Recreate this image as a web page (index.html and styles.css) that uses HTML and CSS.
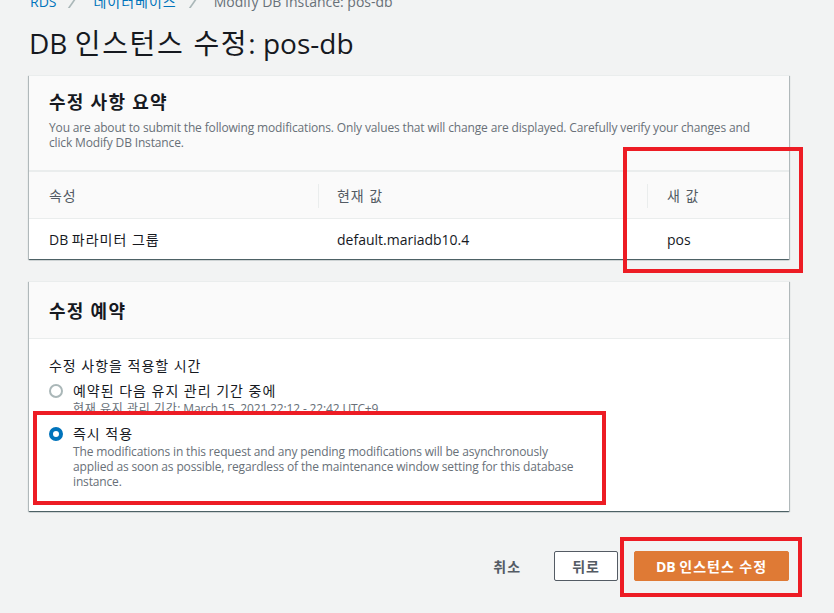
FILE: index.html
```html
<!DOCTYPE html>
<html lang="ko">
<head>
<meta charset="utf-8">
<title>DB 인스턴스 수정: pos-db</title>
<link rel="stylesheet" href="styles.css">
</head>
<body>
<div class="page">
  <nav class="crumbs">
    <a class="crumb-link">RDS</a>
    <span class="crumb-sep"></span>
    <a class="crumb-link ko">데이터베이스</a>
    <span class="crumb-sep"></span>
    <span class="crumb-current">Modify DB Instance: pos-db</span>
  </nav>
  <h1 class="title">DB <span class="ko">인스턴스 수정</span>: pos-db</h1>

  <section class="panel">
    <div class="panel-head">
      <h2 class="panel-title ko">수정 사항 요약</h2>
      <p class="panel-desc">You are about to submit the following modifications. Only values that will change are displayed. Carefully verify your changes and click Modify DB Instance.</p>
    </div>
    <div class="table">
      <div class="cell th c1 ko">속성</div>
      <div class="cell th c2 ko"><span class="divider"></span>현재 값</div>
      <div class="cell th c3 ko"><span class="divider"></span>새 값</div>
      <div class="cell td c1">DB&nbsp;<span class="ko">파라미터 그룹</span></div>
      <div class="cell td c2">default.mariadb10.4</div>
      <div class="cell td c3">pos</div>
    </div>
    <div class="mark mark-newvalue"></div>
  </section>

  <section class="panel">
    <div class="panel-head compact">
      <h2 class="panel-title ko">수정 예약</h2>
    </div>
    <div class="panel-body">
      <div class="field-label ko">수정 사항을 적용할 시간</div>
      <div class="radio-row">
        <span class="radio"></span>
        <div class="radio-text">
          <div class="radio-label ko">예약된 다음 유지 관리 기간 중에</div>
          <div class="radio-desc"><span class="ko">현재 유지 관리 기간</span>: March 15, 2021 22:12 - 22:42 UTC+9</div>
        </div>
      </div>
      <div class="radio-row second">
        <span class="radio checked"></span>
        <div class="radio-text">
          <div class="radio-label ko">즉시 적용</div>
          <div class="radio-desc narrow">The modifications in this request and any pending modifications will be asynchronously applied as soon as possible, regardless of the maintenance window setting for this database instance.</div>
        </div>
      </div>
    </div>
    <div class="mark mark-apply"></div>
  </section>

  <div class="actions">
    <button class="btn btn-link ko">취소</button>
    <button class="btn btn-normal ko">뒤로</button>
    <button class="btn btn-primary">DB <span class="ko">인스턴스 수정</span></button>
    <div class="mark mark-submit"></div>
  </div>
</div>
</body>
</html>
```
FILE: styles.css
```css
* { box-sizing: border-box; }
html, body { margin: 0; padding: 0; }
body {
  background: #f2f3f3;
  font-family: "Open Sans", "Noto Sans CJK KR", sans-serif;
  color: #16191f;
  width: 834px;
  height: 613px;
  overflow: hidden;
}
.ko { letter-spacing: 0.07em; }
.page {
  padding-left: 29px;
  width: 789px;
}
.crumbs {
  display: flex;
  align-items: center;
  height: 20px;
  margin-top: -8px;
  font-size: 14px;
  line-height: 20px;
  padding-left: 1px;
}
.crumb-link { color: #0073bb; }
.crumb-current { color: #687078; }
.crumb-sep {
  width: 2px;
  height: 12px;
  background: #aab7b8;
  transform: skewX(-35deg);
  margin: 0 19px 0 16px;
}
.title {
  margin: 13px 0 0 0;
  font-size: 28px;
  font-weight: 400;
  line-height: 36px;
  height: 50px;
}
.title .ko { letter-spacing: 0.06em; }
.panel {
  position: relative;
  background: #fff;
  border-top: 1px solid #eaeded;
  box-shadow: 0 1px 1px 0 rgba(0,28,36,0.5), 1px 1px 1px 0 rgba(0,28,36,0.2), -1px 1px 1px 0 rgba(0,28,36,0.2);
  margin-bottom: 22px;
}
.panel-head {
  background: #fafafa;
  padding: 14px 20px 20px 20px;
  border-bottom: 2px solid #eaeded;
}
.panel-head.compact {
  padding: 17px 20px 15px 20px;
  border-bottom: 1px solid #eaeded;
}
.panel-title {
  margin: 0;
  font-size: 18px;
  font-weight: 700;
  line-height: 24px;
}
.panel-desc {
  margin: 6px 0 0 0;
  font-size: 12px;
  line-height: 15px;
  color: #687078;
  letter-spacing: -0.15px;
}
.table {
  display: grid;
  grid-template-columns: 289px 329px 1fr;
}
.cell {
  position: relative;
  font-size: 14px;
  padding: 0 20px;
  display: flex;
  align-items: center;
}
.cell.c2 { padding-left: 19px; }
.th {
  height: 47px;
  background: #fafafa;
  color: #545b64;
  border-bottom: 1px solid #eaeded;
}
.td { height: 40px; }
.divider {
  position: absolute;
  left: 0;
  top: 12px;
  height: 24px;
  width: 1px;
  background: #eaeded;
}
.panel-body {
  padding: 17px 20px 22px 20px;
}
.field-label {
  font-size: 14px;
  line-height: 20px;
  color: #16191f;
}
.radio-row {
  display: flex;
  align-items: flex-start;
  margin-top: 5px;
}
.radio-row.second { margin-top: 8px; }
.radio {
  flex: none;
  width: 14px;
  height: 14px;
  border-radius: 50%;
  border: 2px solid #aab7b8;
  background: #fff;
  margin: 3px 10px 0 0;
}
.radio.checked {
  border: 4px solid #0073bb;
  background: #fff;
}
.radio-label {
  font-size: 14px;
  line-height: 20px;
}
.radio-desc {
  font-size: 12px;
  line-height: 15px;
  color: #687078;
  letter-spacing: -0.15px;
}
.radio-desc.narrow { max-width: 505px; }
.radio-desc .ko { letter-spacing: 0.05em; }
.actions {
  position: relative;
  display: flex;
  justify-content: flex-end;
  align-items: center;
  margin-top: 40px;
}
.btn {
  font-family: "Open Sans", "Noto Sans CJK KR", sans-serif;
  font-size: 14px;
  font-weight: 700;
  height: 30px;
  border-radius: 2px;
  padding: 0 20px;
  cursor: pointer;
}
.btn-link {
  background: transparent;
  border: 1px solid transparent;
  color: #545b64;
  margin-right: 12px;
}
.btn-normal {
  background: #fff;
  border: 1px solid #545b64;
  color: #545b64;
  width: 64px;
  padding: 0;
  margin-right: 16px;
}
.btn-primary {
  background: #df7a35;
  border: 1px solid #df7a35;
  color: #fff;
  width: 155px;
  padding: 0;
}
.mark {
  position: absolute;
  border: 4px solid #ed1c24;
  pointer-events: none;
}
.mark-newvalue {
  left: 594px;
  top: 71px;
  width: 180px;
  height: 126px;
}
.mark-apply {
  left: 4px;
  top: 129px;
  width: 573px;
  height: 94px;
}
.mark-submit {
  right: -13px;
  top: -14px;
  width: 182px;
  height: 60px;
}
```
